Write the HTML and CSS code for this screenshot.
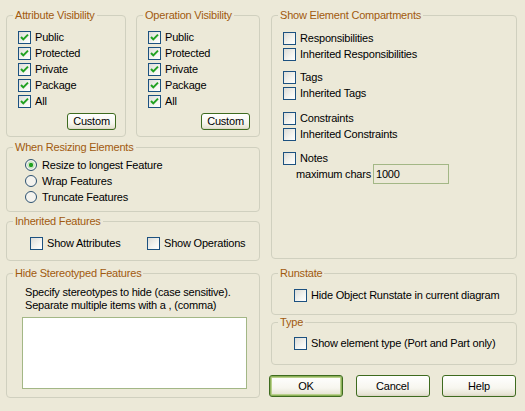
FILE: index.html
```html
<!DOCTYPE html>
<html>
<head>
<meta charset="utf-8">
<link rel="stylesheet" href="styles.css">
</head>
<body>
<div class="dialog">
  <div class="col left">
    <div class="toprow">
      <fieldset class="grp vis attr">
        <legend>Attribute Visibility</legend>
        <div class="list">
          <label class="row"><span class="cb on"><svg width="11" height="11" viewBox="0 0 11 11"><path d="M2 5 L4.3 7.4 L9 2.6" fill="none" stroke="#21A121" stroke-width="2"/></svg></span>Public</label>
          <label class="row"><span class="cb on"><svg width="11" height="11" viewBox="0 0 11 11"><path d="M2 5 L4.3 7.4 L9 2.6" fill="none" stroke="#21A121" stroke-width="2"/></svg></span>Protected</label>
          <label class="row"><span class="cb on"><svg width="11" height="11" viewBox="0 0 11 11"><path d="M2 5 L4.3 7.4 L9 2.6" fill="none" stroke="#21A121" stroke-width="2"/></svg></span>Private</label>
          <label class="row"><span class="cb on"><svg width="11" height="11" viewBox="0 0 11 11"><path d="M2 5 L4.3 7.4 L9 2.6" fill="none" stroke="#21A121" stroke-width="2"/></svg></span>Package</label>
          <label class="row"><span class="cb on"><svg width="11" height="11" viewBox="0 0 11 11"><path d="M2 5 L4.3 7.4 L9 2.6" fill="none" stroke="#21A121" stroke-width="2"/></svg></span>All</label>
        </div>
        <div class="btnline"><button class="btn small">Custom</button></div>
      </fieldset>
      <fieldset class="grp vis op">
        <legend>Operation Visibility</legend>
        <div class="list">
          <label class="row"><span class="cb on"><svg width="11" height="11" viewBox="0 0 11 11"><path d="M2 5 L4.3 7.4 L9 2.6" fill="none" stroke="#21A121" stroke-width="2"/></svg></span>Public</label>
          <label class="row"><span class="cb on"><svg width="11" height="11" viewBox="0 0 11 11"><path d="M2 5 L4.3 7.4 L9 2.6" fill="none" stroke="#21A121" stroke-width="2"/></svg></span>Protected</label>
          <label class="row"><span class="cb on"><svg width="11" height="11" viewBox="0 0 11 11"><path d="M2 5 L4.3 7.4 L9 2.6" fill="none" stroke="#21A121" stroke-width="2"/></svg></span>Private</label>
          <label class="row"><span class="cb on"><svg width="11" height="11" viewBox="0 0 11 11"><path d="M2 5 L4.3 7.4 L9 2.6" fill="none" stroke="#21A121" stroke-width="2"/></svg></span>Package</label>
          <label class="row"><span class="cb on"><svg width="11" height="11" viewBox="0 0 11 11"><path d="M2 5 L4.3 7.4 L9 2.6" fill="none" stroke="#21A121" stroke-width="2"/></svg></span>All</label>
        </div>
        <div class="btnline"><button class="btn small">Custom</button></div>
      </fieldset>
    </div>

    <fieldset class="grp resize">
      <legend>When Resizing Elements</legend>
      <div class="list">
        <label class="row"><span class="rb"><svg width="12" height="12" viewBox="0 0 12 12"><circle cx="6" cy="6" r="5.5" fill="#F4F3EE" stroke="#2C5170"/><circle cx="6" cy="6" r="2.2" fill="#21A121"/><circle cx="6" cy="6" r="3.2" fill="none" stroke="#A6D8A0" stroke-width="0.8"/></svg></span>Resize to longest Feature</label>
        <label class="row"><span class="rb"><svg width="12" height="12" viewBox="0 0 12 12"><circle cx="6" cy="6" r="5.5" fill="#F4F3EE" stroke="#2C5170"/></svg></span>Wrap Features</label>
        <label class="row"><span class="rb"><svg width="12" height="12" viewBox="0 0 12 12"><circle cx="6" cy="6" r="5.5" fill="#F4F3EE" stroke="#2C5170"/></svg></span>Truncate Features</label>
      </div>
    </fieldset>

    <fieldset class="grp inherited">
      <legend>Inherited Features</legend>
      <div class="pair">
        <label class="row first"><span class="cb"></span>Show Attributes</label>
        <label class="row"><span class="cb"></span>Show Operations</label>
      </div>
    </fieldset>

    <fieldset class="grp hide">
      <legend>Hide Stereotyped Features</legend>
      <div class="hideinner">
        <p class="note">Specify stereotypes to hide (case sensitive).<br>Separate multiple items with a , (comma)</p>
        <div class="area"></div>
      </div>
    </fieldset>
  </div>

  <div class="col right">
    <fieldset class="grp compart">
      <legend>Show Element Compartments</legend>
      <div class="list">
        <div class="set">
          <label class="row"><span class="cb"></span>Responsibilities</label>
          <label class="row"><span class="cb"></span>Inherited Responsibilities</label>
        </div>
        <div class="set s2">
          <label class="row"><span class="cb"></span>Tags</label>
          <label class="row"><span class="cb"></span>Inherited Tags</label>
        </div>
        <div class="set s3">
          <label class="row"><span class="cb"></span>Constraints</label>
          <label class="row"><span class="cb"></span>Inherited Constraints</label>
        </div>
        <div class="set s4">
          <label class="row"><span class="cb"></span>Notes</label>
          <div class="maxrow"><span class="maxlabel">maximum chars</span><span class="field">1000</span></div>
        </div>
      </div>
    </fieldset>

    <fieldset class="grp runstate">
      <legend>Runstate</legend>
      <label class="row"><span class="cb"></span>Hide Object Runstate in current diagram</label>
    </fieldset>

    <fieldset class="grp type">
      <legend>Type</legend>
      <label class="row"><span class="cb"></span>Show element type (Port and Part only)</label>
    </fieldset>

    <div class="buttons">
      <button class="btn big default">OK</button>
      <button class="btn big">Cancel</button>
      <button class="btn big">Help</button>
    </div>
  </div>
</div>
</body>
</html>
```

FILE: styles.css
```css
* { box-sizing: border-box; }
html, body {
  margin: 0;
  padding: 0;
  background: #ECE9D8;
}
body {
  font-family: "Liberation Sans", Tahoma, Arial, sans-serif;
  font-size: 11px;
  letter-spacing: -0.2px;
  color: #000;
  width: 525px;
  height: 411px;
  overflow: hidden;
}
.dialog {
  display: flex;
  gap: 11px;
  padding: 9px 0 0 6px;
}
.col { display: flex; flex-direction: column; }
.col.left { width: 254px; }
.col.right { width: 246px; }

.grp {
  margin: 0;
  padding: 0;
  border: 1px solid #D0D0BF;
  border-radius: 4px;
  min-width: 0;
}
.grp legend {
  margin-left: 6px;
  padding: 0 2px;
  line-height: 13px;
  height: 13px;
  color: #A15A0E;
}

.row {
  display: flex;
  align-items: center;
  height: 16px;
  white-space: nowrap;
}
.cb {
  width: 13px;
  height: 13px;
  border: 1px solid #1C5180;
  background: linear-gradient(135deg, #DCDCD7 0%, #F4F4F0 60%, #FFFFFF 100%);
  margin-right: 4px;
  flex: none;
  display: flex;
}
.rb {
  width: 12px;
  height: 12px;
  margin-right: 5px;
  flex: none;
  display: flex;
}

.toprow { display: flex; gap: 10px; }
.vis { height: 128px; }
.attr { width: 120px; }
.op { width: 124px; }
.vis .list { padding: 7px 0 0 11px; }
.btnline { display: flex; justify-content: flex-end; padding: 4px 9px 0 0; }

.btn {
  font-family: inherit;
  font-size: 11px;
  letter-spacing: -0.2px;
  color: #000;
  border: 1px solid #3E6B1F;
  border-radius: 3px;
  background: linear-gradient(#FFFFFF 0%, #F7F6EF 60%, #E8E5D6 90%, #D9D4C2 100%);
  padding: 0;
  margin: 0;
}
.btn.small { width: 49px; height: 17px; line-height: 15px; }
.btn.big { width: 74px; height: 22px; }
.btn.default { box-shadow: inset 0 0 0 1px #8DB159, inset 0 0 0 2px #B9D08C; }

.resize { margin-top: 4px; height: 71px; }
.resize .list { padding: 3px 0 0 18px; }

.inherited { margin-top: 3px; height: 46px; }
.pair { display: flex; padding: 7px 0 0 23px; }
.pair .first { width: 117px; }

.hide { margin-top: 6px; height: 131px; }
.hideinner { padding: 6px 0 0 15px; }
.note { margin: 0 0 5px 3px; line-height: 13px; }
.area {
  width: 225px;
  height: 72px;
  background: #fff;
  border: 1px solid #A3B786;
}

.compart { height: 250px; }
.compart .list { padding: 8px 0 0 11px; }
.s2 { margin-top: 7px; }
.s3 { margin-top: 9px; }
.s4 { margin-top: 8px; }
.maxrow {
  display: flex;
  align-items: center;
  gap: 2px;
  margin-top: -2px;
  padding-left: 13px;
}
.maxlabel { white-space: nowrap; }
.field {
  width: 76px;
  height: 20px;
  line-height: 18px;
  background: #ECE9D8;
  border: 1px solid #A3B786;
  padding-left: 2px;
}

.runstate { margin-top: 8px; height: 48px; }
.runstate .row { margin: 7px 0 0 22px; }
.type { margin-top: 1px; height: 49px; }
.type .row { margin: 6px 0 0 22px; }

.buttons {
  display: flex;
  justify-content: space-between;
  margin: 10px 1px 0 -2px;
}
```
